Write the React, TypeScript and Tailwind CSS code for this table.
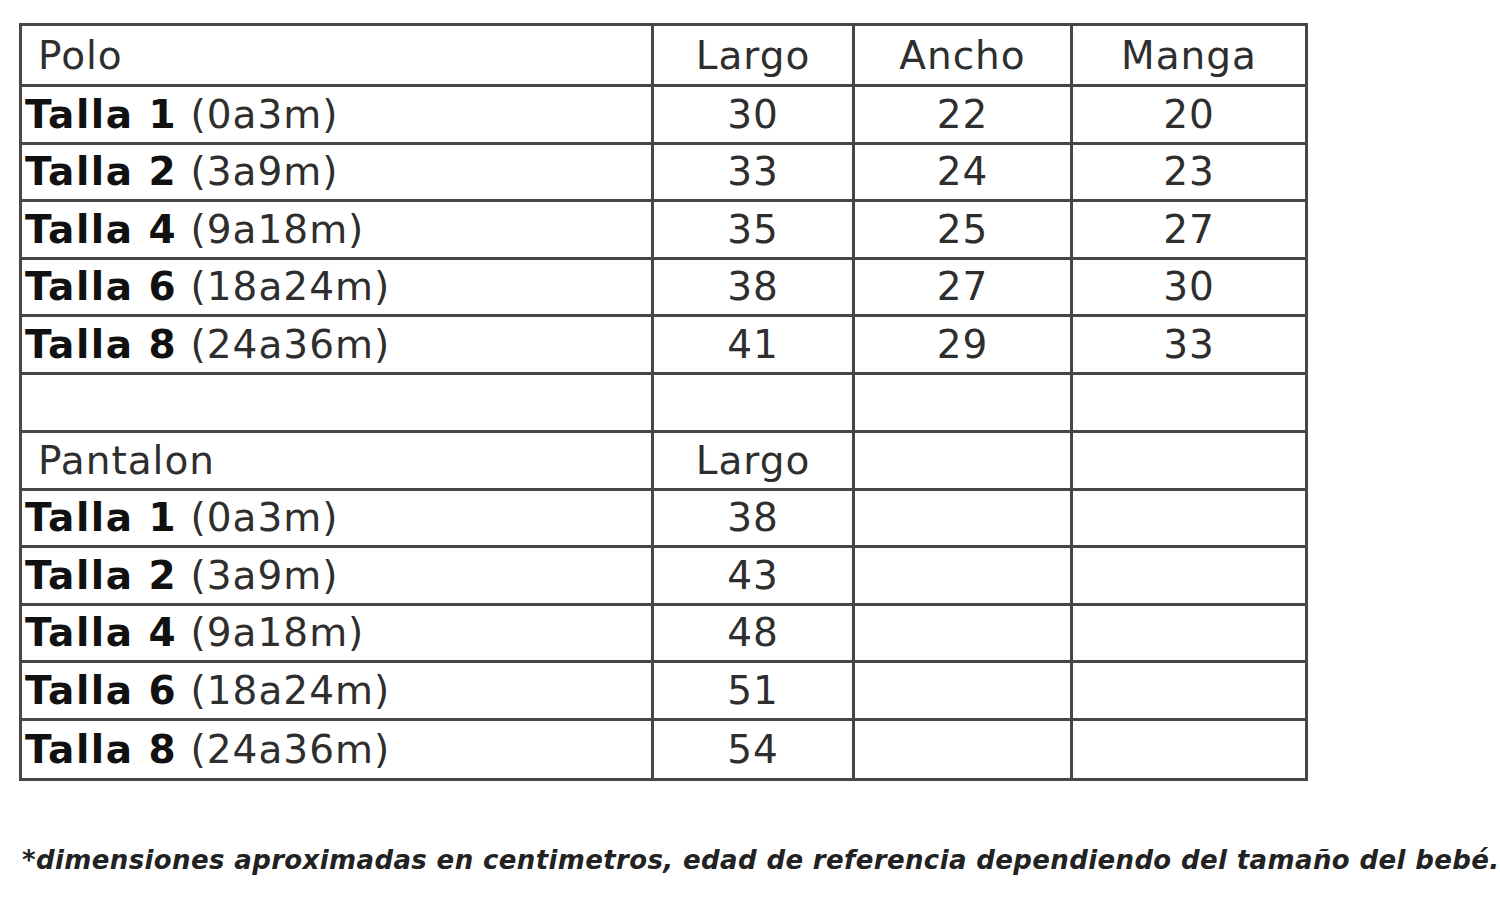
import React from "react"

const polo = [
  { talla: "Talla 1", edad: "(0a3m)", largo: 30, ancho: 22, manga: 20 },
  { talla: "Talla 2", edad: "(3a9m)", largo: 33, ancho: 24, manga: 23 },
  { talla: "Talla 4", edad: "(9a18m)", largo: 35, ancho: 25, manga: 27 },
  { talla: "Talla 6", edad: "(18a24m)", largo: 38, ancho: 27, manga: 30 },
  { talla: "Talla 8", edad: "(24a36m)", largo: 41, ancho: 29, manga: 33 },
]

const pantalon = [
  { talla: "Talla 1", edad: "(0a3m)", largo: 38 },
  { talla: "Talla 2", edad: "(3a9m)", largo: 43 },
  { talla: "Talla 4", edad: "(9a18m)", largo: 48 },
  { talla: "Talla 6", edad: "(18a24m)", largo: 51 },
  { talla: "Talla 8", edad: "(24a36m)", largo: 54 },
]

const cell = "border-[3px] border-[#474747] p-0 align-middle"

function SizeCell({ talla, edad }: { talla: string; edad: string }) {
  return (
    <td className={cell + " pl-[3px] text-left whitespace-nowrap"}>
      <span className="font-bold text-[#111] tracking-[1.5px]">{talla}</span> {edad}
    </td>
  )
}

export default function App() {
  return (
    <div className="min-h-[901px] bg-white text-[#2e2e2e] font-['DejaVu_Sans',Verdana,sans-serif]">
      <div className="pt-[23px] pl-[19px]">
        <table className="border-collapse text-[39px] leading-none tracking-[1px]">
          <colgroup>
            <col className="w-[632px]" />
            <col className="w-[201px]" />
            <col className="w-[218px]" />
            <col className="w-[235px]" />
          </colgroup>
          <tbody>
            <tr className="h-[61px]">
              <td className={cell + " pl-[16px] text-left"}>Polo</td>
              <td className={cell + " text-center"}>Largo</td>
              <td className={cell + " text-center"}>Ancho</td>
              <td className={cell + " text-center"}>Manga</td>
            </tr>
            {polo.map((r) => (
              <tr key={"p" + r.talla} className="h-[57.5px]">
                <SizeCell talla={r.talla} edad={r.edad} />
                <td className={cell + " text-center"}>{r.largo}</td>
                <td className={cell + " text-center"}>{r.ancho}</td>
                <td className={cell + " text-center"}>{r.manga}</td>
              </tr>
            ))}
            <tr className="h-[58px]">
              <td className={cell}></td>
              <td className={cell}></td>
              <td className={cell}></td>
              <td className={cell}></td>
            </tr>
            <tr className="h-[58px]">
              <td className={cell + " pl-[16px] text-left"}>Pantalon</td>
              <td className={cell + " text-center"}>Largo</td>
              <td className={cell}></td>
              <td className={cell}></td>
            </tr>
            {pantalon.map((r, i) => (
              <tr key={"t" + r.talla} className={i === pantalon.length - 1 ? "h-[60px]" : "h-[57.5px]"}>
                <SizeCell talla={r.talla} edad={r.edad} />
                <td className={cell + " text-center"}>{r.largo}</td>
                <td className={cell}></td>
                <td className={cell}></td>
              </tr>
            ))}
          </tbody>
        </table>
        <p className="mt-[66px] pl-[3px] text-[26px] leading-none font-bold italic text-[#222] tracking-[0.38px] whitespace-nowrap">
          *dimensiones aproximadas en centimetros, edad de referencia dependiendo del tamaño del bebé.
        </p>
      </div>
    </div>
  )
}
